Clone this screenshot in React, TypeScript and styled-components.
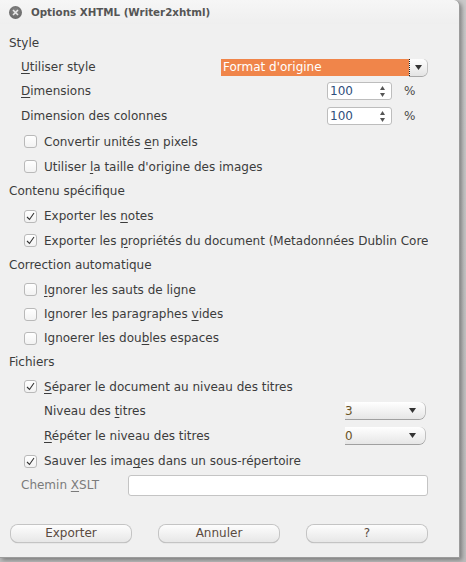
import React from 'react';
import styled, { createGlobalStyle, css } from 'styled-components';

const GlobalStyle = createGlobalStyle`
  html, body {
    margin: 0;
    padding: 0;
    background: #b4b4b4;
  }
  body {
    font-family: 'DejaVu Sans', 'Liberation Sans', sans-serif;
    font-size: 12px;
    color: #3c3c3c;
  }
`;

const Page = styled.div`
  width: 466px;
  height: 562px;
  overflow: hidden;
  background: linear-gradient(#c9c9c9, #bdbdbd);
`;

const Window = styled.div`
  width: 459px;
  height: 557px;
  background: #f0f0f0;
  border-right: 1px solid #9c9c9c;
  border-bottom: 1px solid #9c9c9c;
  border-top-right-radius: 6px;
  box-shadow: 2px 2px 4px rgba(0, 0, 0, 0.35);
  display: flex;
  flex-direction: column;
  overflow: hidden;
`;

const TitleBar = styled.div`
  height: 24px;
  display: flex;
  align-items: center;
  gap: 9px;
  padding-left: 9px;
  background: linear-gradient(#f6f6f6, #efefef);
  border-top-right-radius: 6px;
`;

const CloseButton = styled.div`
  width: 13px;
  height: 13px;
  border-radius: 50%;
  background: radial-gradient(circle at 50% 40%, #8a8a8a, #5d5d5d);
  display: flex;
  align-items: center;
  justify-content: center;
`;

const Title = styled.span`
  font-weight: bold;
  font-size: 10.3px;
  color: #555;
`;

const Content = styled.div`
  padding-top: 7px;
  display: flex;
  flex-direction: column;
`;

const Row = styled.div<{ $h: number; $indent?: number }>`
  height: ${(p) => p.$h}px;
  display: flex;
  align-items: center;
  padding-left: ${(p) => p.$indent ?? 9}px;
  white-space: nowrap;
  overflow: hidden;
  width: 428px;
  box-sizing: border-box;
`;

const Label = styled.span<{ $w?: number; $muted?: boolean }>`
  ${(p) => p.$w && css`width: ${p.$w}px; flex-shrink: 0;`}
  color: ${(p) => (p.$muted ? '#7b7b7b' : '#3c3c3c')};
  overflow: hidden;
`;

const Key = styled.span`
  text-decoration: underline;
  text-underline-offset: 2px;
`;

const Box = styled.span`
  width: 11px;
  height: 11px;
  border: 1px solid #b9b9b9;
  border-radius: 3px;
  background: linear-gradient(#ffffff, #f2f2f2);
  margin-left: 24px;
  margin-right: 7px;
  flex-shrink: 0;
  display: flex;
  align-items: center;
  justify-content: center;
`;

const Combo = styled.div`
  width: 206px;
  height: 17px;
  display: flex;
`;

const ComboText = styled.div`
  flex: 1;
  background: #f0854a;
  color: #fff;
  line-height: 17px;
  padding-left: 2px;
`;

const ComboButton = styled.div`
  width: 17px;
  border-left: 1px dotted #222;
  border-radius: 0 5px 5px 0;
  background: linear-gradient(#fefefe, #e4e4e4);
  box-shadow: 0 1px 0 #a8a8a8, 1px 0 0 #c2c2c2;
  display: flex;
  align-items: center;
  justify-content: center;
`;

const Spin = styled.div`
  width: 65px;
  height: 18px;
  border: 1px solid #bdbdbd;
  border-radius: 3px;
  background: #fff;
  display: flex;
  align-items: center;
  justify-content: space-between;
  padding: 0 6px 0 2px;
  box-sizing: border-box;
  color: #2f4e7c;
`;

const SpinArrows = styled.div`
  display: flex;
  flex-direction: column;
  gap: 3px;
`;

const Unit = styled.span`
  margin-left: 12px;
  color: #4a4a4a;
`;

const Select = styled.div`
  width: 80px;
  height: 17px;
  box-sizing: border-box;
  border-radius: 0 6px 6px 0;
  background: linear-gradient(#ffffff, #e6e6e6);
  box-shadow: 0 1px 0 #a0a0a0, 1px 0 0 #c0c0c0;
  display: flex;
  align-items: center;
  justify-content: space-between;
  padding: 0 9px 0 0;
  color: #6a5326;
`;

const TextInput = styled.div`
  width: 298px;
  height: 19px;
  border: 1px solid #c4c4c4;
  border-radius: 3px;
  background: #fff;
`;

const ButtonBar = styled.div`
  margin-top: 28px;
  display: flex;
  gap: 28px;
  padding-left: 11px;
`;

const Button = styled.button`
  width: 120px;
  height: 17px;
  padding: 0;
  border: none;
  border-radius: 7px;
  background: linear-gradient(#fdfdfd, #e7e7e7);
  box-shadow: 0 0 0 1px #c4c4c4, 0 1px 1px #9a9a9a;
  font-family: 'DejaVu Sans', 'Liberation Sans', sans-serif;
  font-size: 12px;
  color: #5a4a40;
  line-height: 17px;
`;

const Triangle = ({
  color = '#333',
  up = false,
  w = 7,
  h = 5,
}: {
  color?: string;
  up?: boolean;
  w?: number;
  h?: number;
}) => (
  <svg width={w} height={h} viewBox={`0 0 ${w} ${h}`}>
    <path
      d={up ? `M0 ${h} L${w} ${h} L${w / 2} 0 Z` : `M0 0 L${w} 0 L${w / 2} ${h} Z`}
      fill={color}
    />
  </svg>
);

const Check = ({ checked }: { checked?: boolean }) => (
  <Box>
    {checked && (
      <svg width="9" height="9" viewBox="0 0 9 9">
        <path d="M1 5 L3.5 7.5 L8 1" fill="none" stroke="#333" strokeWidth="1.1" />
      </svg>
    )}
  </Box>
);

const SpinBox = ({ value }: { value: string }) => (
  <Spin>
    {value}
    <SpinArrows>
      <Triangle color="#555" up w={5} h={4} />
      <Triangle color="#555" w={5} h={4} />
    </SpinArrows>
  </Spin>
);

const App: React.FC = () => (
  <>
    <GlobalStyle />
    <Page>
      <Window>
        <TitleBar>
          <CloseButton>
            <svg width="7" height="7" viewBox="0 0 7 7">
              <path d="M1 1 L6 6 M6 1 L1 6" stroke="#e8e8e8" strokeWidth="1.6" />
            </svg>
          </CloseButton>
          <Title>Options XHTML (Writer2xhtml)</Title>
        </TitleBar>
        <Content>
          <Row $h={24}>Style</Row>
          <Row $h={24} $indent={21}>
            <Label $w={200}>
              <Key>U</Key>tiliser style
            </Label>
            <Combo>
              <ComboText>Format d'origine</ComboText>
              <ComboButton>
                <Triangle />
              </ComboButton>
            </Combo>
          </Row>
          <Row $h={24.5} $indent={21}>
            <Label $w={306}>
              <Key>D</Key>imensions
            </Label>
            <SpinBox value="100" />
            <Unit>%</Unit>
          </Row>
          <Row $h={25.5} $indent={21}>
            <Label $w={306}>Dimension des colonnes</Label>
            <SpinBox value="100" />
            <Unit>%</Unit>
          </Row>
          <Row $h={25.5} $indent={0}>
            <Check />
            <Label>
              Convertir unités <Key>e</Key>n pixels
            </Label>
          </Row>
          <Row $h={24.5} $indent={0}>
            <Check />
            <Label>
              Utiliser <Key>l</Key>a taille d'origine des images
            </Label>
          </Row>
          <Row $h={24.5}>Contenu spécifique</Row>
          <Row $h={25} $indent={0}>
            <Check checked />
            <Label>
              Exporter les <Key>n</Key>otes
            </Label>
          </Row>
          <Row $h={24.5} $indent={0}>
            <Check checked />
            <Label>
              Exporter les <Key>p</Key>ropriétés du document (Metadonnées Dublin Core)
            </Label>
          </Row>
          <Row $h={24.5}>Correction automatique</Row>
          <Row $h={24.5} $indent={0}>
            <Check />
            <Label>
              <Key>I</Key>gnorer les sauts de ligne
            </Label>
          </Row>
          <Row $h={24} $indent={0}>
            <Check />
            <Label>
              Ignorer les paragraphes <Key>v</Key>ides
            </Label>
          </Row>
          <Row $h={24} $indent={0}>
            <Check />
            <Label>
              Ignoerer les dou<Key>b</Key>les espaces
            </Label>
          </Row>
          <Row $h={24.5}>Fichiers</Row>
          <Row $h={24} $indent={0}>
            <Check checked />
            <Label>
              <Key>S</Key>éparer le document au niveau des titres
            </Label>
          </Row>
          <Row $h={24} $indent={44}>
            <Label $w={301}>
              Niveau des <Key>t</Key>itres
            </Label>
            <Select>
              3
              <Triangle />
            </Select>
          </Row>
          <Row $h={26} $indent={44}>
            <Label $w={301}>
              <Key>R</Key>épéter le niveau des titres
            </Label>
            <Select>
              0
              <Triangle />
            </Select>
          </Row>
          <Row $h={25} $indent={0}>
            <Check checked />
            <Label>
              Sauver les ima<Key>g</Key>es dans un sous-répertoire
            </Label>
          </Row>
          <Row $h={23.5} $indent={21}>
            <Label $w={107} $muted>
              Chemin <Key>X</Key>SLT
            </Label>
            <TextInput />
          </Row>
        </Content>
        <ButtonBar>
          <Button>Exporter</Button>
          <Button>Annuler</Button>
          <Button>?</Button>
        </ButtonBar>
      </Window>
    </Page>
  </>
);

export default App;
